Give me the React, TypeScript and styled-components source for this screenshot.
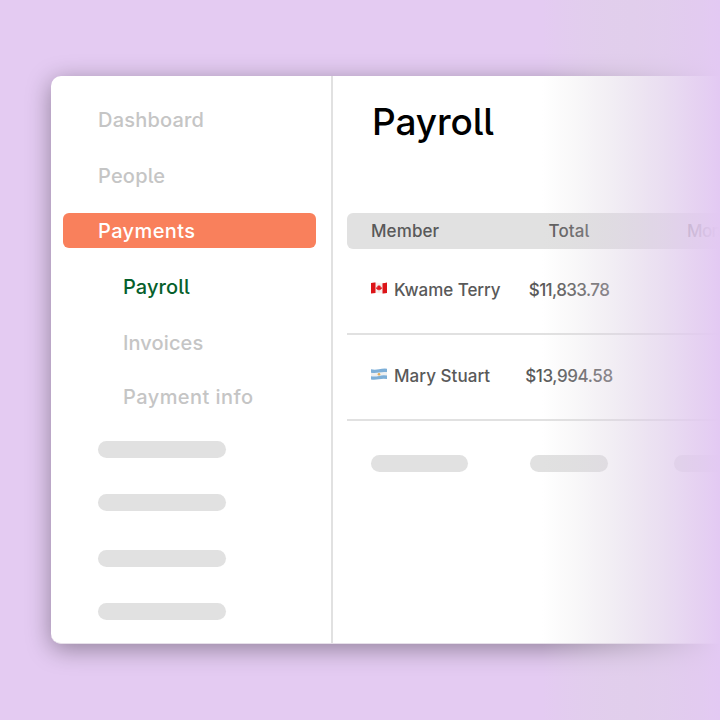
import React from "react";
import styled, { createGlobalStyle } from "styled-components";

const GlobalStyle = createGlobalStyle`
  * { box-sizing: border-box; }
  body { margin: 0; background: #e4cbf2; }
`;

const mix = (a: number, b: number, t: number) => Math.round(a + (b - a) * t);

// Colour and opacity are interpolated separately, so the middle of the fade is greyer.
const fadeStops = Array.from({ length: 21 }, (_, i) => {
  const t = i / 20;
  return `rgba(${mix(217, 227, t)}, ${mix(217, 201, t)}, ${mix(217, 243, t)}, ${t}) ${t * 100}%`;
}).join(", ");

const Stage = styled.main`
  position: relative;
  width: 720px;
  height: 720px;
  padding: 76px 0 0 51px;
  overflow: hidden;
  background: #e4cbf2;
  font-family: Inter, "Noto Sans", sans-serif;
  font-weight: 500;
  font-feature-settings: "cv05";
  white-space: nowrap;
`;

const Fade = styled.div`
  position: absolute;
  top: 0;
  right: 0;
  width: 178px;
  height: 100%;
  background: linear-gradient(90deg, ${fadeStops});
`;

const Card = styled.div`
  display: flex;
  width: 760px;
  height: 568px;
  background: #fff;
  border-bottom: 1px solid #e6dfe9;
  border-radius: 10px;
  box-shadow: 0 5px 25px rgba(0, 0, 0, 0.37);
`;

const Sidebar = styled.nav`
  display: flex;
  flex-direction: column;
  width: 282px;
  padding: 26px 17px 0 12px;
  border-right: 2px solid #e1e1e1;
`;

const NavItem = styled.a<{ $gap?: number; $nested?: boolean; $tone?: string; $active?: boolean; $track?: number }>`
  display: block;
  width: 253px;
  height: 35px;
  margin-top: ${(p) => p.$gap ?? 0}px;
  padding-left: ${(p) => (p.$nested ? 60 : 35)}px;
  border-radius: 6px;
  background: ${(p) => (p.$active ? "#f9805c" : "transparent")};
  color: ${(p) => p.$tone ?? "#c5c5c5"};
  font-size: 20px;
  line-height: 36px;
  letter-spacing: ${(p) => p.$track ?? 0}px;
`;

const Placeholder = styled.div<{ $width: number }>`
  width: ${(p) => p.$width}px;
  height: 17px;
  border-radius: 9px;
  background: #e1e1e1;
`;

const NavPlaceholders = styled.div`
  display: grid;
  grid-template-rows: 53px 56px 53px 17px;
  padding: 27px 0 0 35px;
`;

const Content = styled.section`
  flex: 1;
  padding-left: 14px;
`;

const Title = styled.h1`
  height: 137px;
  margin: 0;
  padding: 22px 0 0 25px;
  color: #000;
  font-size: 37px;
  font-weight: 500;
  line-height: 48px;
  letter-spacing: -0.1px;
`;

const Columns = styled.div`
  display: grid;
  grid-template-columns: 141px 175px 150px;
  align-items: center;
  padding-left: 24px;
  color: #595959;
  font-size: 17px;
`;

const HeaderRow = styled(Columns)`
  height: 35.5px;
  border-radius: 6px;
  background: #e1e1e1;
`;

const MemberRow = styled(Columns)<{ $height: number }>`
  height: ${(p) => p.$height}px;
  padding-bottom: 2px;
  border-bottom: 2px solid #e1e1e1;
`;

const PlaceholderRow = styled(Columns)`
  grid-template-columns: 159px 144px 150px;
  height: 85px;
`;

const Member = styled.div`
  display: flex;
  align-items: center;
  gap: 7px;
`;

const Flag = styled.svg`
  width: 16px;
  height: 12px;
  margin-top: -4px;
`;

const Label = styled.span<{ $track?: number }>`
  letter-spacing: ${(p) => p.$track ?? 0}px;
`;

const Amount = styled(Label)`
  width: 114px;
  text-align: center;
`;

const CanadaFlag = () => (
  <Flag viewBox="0 0 16 12">
    <path d="M0 1Q4 .2 8 1T16 .6V11Q12 11.8 8 11T0 11.4Z" fill="#f5f1ef" />
    <path d="M0 1Q2 .5 4.500 .6V11Q2 11 0 11.400ZM11.500 1.200Q14 1.200 16 .6V11Q14 11.500 11.500 11.400Z" fill="#dc1418" />
    <path d="m8 2.700.8 1.400.9-.4-.2 1.700 1.200-.7-.2 1.100.7.500-2.100 1.600-.9-.1v1.500h-.4V7.800l-1 .1-2-1.600.7-.5-.2-1.100 1.100.7L6.300 3.700l.9.4Z" fill="#e31a22" />
  </Flag>
);

const ArgentinaFlag = () => (
  <Flag viewBox="0 0 16 12">
    <path d="M0 1.300Q4 2 8 1.200T16 .7V11Q12 10.400 8 11.200T0 11.500Z" fill="#7dafd8" />
    <path d="M0 4.700Q4 5.300 8 4.500T16 4.100V7.600Q12 7 8 7.900T0 8.200Z" fill="#eef0f1" />
    <circle cx="8" cy="6.200" r="1.300" fill="#e3ad58" />
  </Flag>
);

export default function App() {
  return (
    <>
      <GlobalStyle />
      <Stage>
        <Card>
          <Sidebar>
            <NavItem $track={0.2}>Dashboard</NavItem>
            <NavItem $gap={21} $track={0.2}>People</NavItem>
            <NavItem $gap={20} $track={0.4} $active $tone="#fff">Payments</NavItem>
            <NavItem $gap={21} $track={0.1} $nested $tone="#065f2b">Payroll</NavItem>
            <NavItem $gap={21} $track={0.1} $nested>Invoices</NavItem>
            <NavItem $gap={19} $track={0.45} $nested>Payment info</NavItem>
            <NavPlaceholders>
              <Placeholder $width={128} />
              <Placeholder $width={128} />
              <Placeholder $width={128} />
              <Placeholder $width={128} />
            </NavPlaceholders>
          </Sidebar>
          <Content>
            <Title>Payroll</Title>
            <HeaderRow>
              <Label $track={0.1}>Member</Label>
              <Amount $track={0.1}>Total</Amount>
              <Label $track={-0.6}>Mon</Label>
            </HeaderRow>
            <MemberRow $height={86.5}>
              <Member><CanadaFlag /><Label $track={-0.05}>Kwame Terry</Label></Member>
              <Amount $track={-0.6}>$11,833.78</Amount>
            </MemberRow>
            <MemberRow $height={86}>
              <Member><ArgentinaFlag /><Label $track={0.05}>Mary Stuart</Label></Member>
              <Amount $track={-0.4}>$13,994.58</Amount>
            </MemberRow>
            <PlaceholderRow>
              <Placeholder $width={97} />
              <Placeholder $width={78} />
              <Placeholder $width={90} />
            </PlaceholderRow>
          </Content>
        </Card>
        <Fade />
      </Stage>
    </>
  );
}
